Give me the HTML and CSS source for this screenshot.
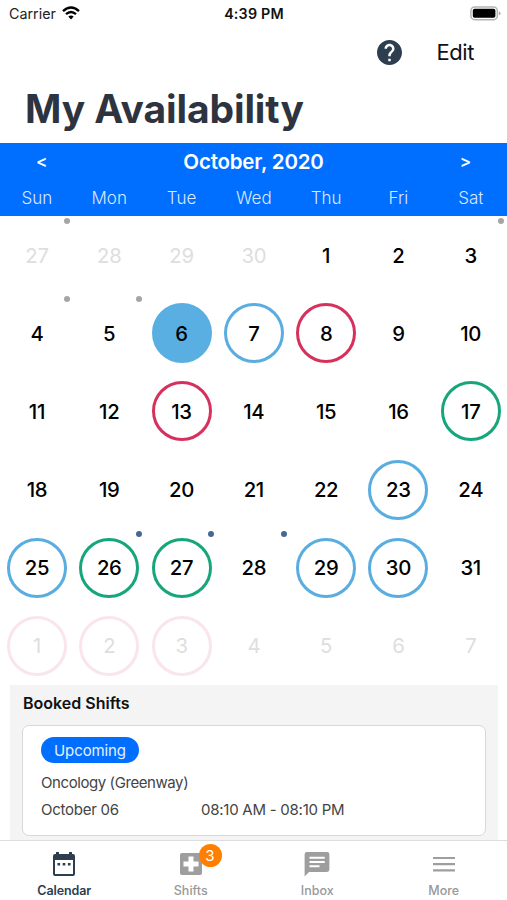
FILE: index.html
```html
<!DOCTYPE html>
<html lang="en">
<head>
<meta charset="utf-8">
<title>My Availability</title>
<link rel="stylesheet" href="styles.css">
</head>
<body>
<div class="screen">
  <div class="status">
    <div class="carrier"><span>Carrier</span>
      <svg width="18" height="14" viewBox="0 0 18 14" fill="none" stroke="#000" stroke-width="2.4"><path d="M1 5.2Q9-2.2 17 5.2M4 8.2Q9 3.8 14 8.2"/><path d="M6.3 10.6Q9 8.5 11.7 10.6L9 13.5Z" fill="#000" stroke="none"/></svg>
    </div>
    <div class="clock">4:39 PM</div>
    <div class="power">
      <svg width="31" height="15" viewBox="0 0 31 15"><rect x=".9" y=".9" width="26.4" height="12.8" rx="3.8" fill="#fff" stroke="#b4b4b4" stroke-width="1.5"/><rect x="2.8" y="2.8" width="22.6" height="9" rx="1.8"/><path d="M28.8 5.2Q30.6 6 30.6 7.3T28.8 9.4Z" fill="#aaa"/></svg>
    </div>
  </div>
  <div class="actions">
    <svg class="help" viewBox="2 2 20 20" fill="#2c3e50"><path d="M12 2C6.48 2 2 6.48 2 12s4.48 10 10 10 10-4.48 10-10S17.52 2 12 2zm1 17h-2v-2h2v2zm2.07-7.75l-.9.92C13.45 12.9 13 13.5 13 15h-2v-.5c0-1.1.45-2.1 1.17-2.83l1.24-1.26c.37-.36.59-.86.59-1.41 0-1.1-.9-2-2-2s-2 .9-2 2H8c0-2.21 1.79-4 4-4s4 1.79 4 4c0 .88-.36 1.68-.93 2.25z"/></svg>
    <span class="edit">Edit</span>
  </div>
  <h1>My Availability</h1>
  <header class="cal-head">
    <div class="month"><span class="arrow">&lt;</span><span class="name">October, 2020</span><span class="arrow">&gt;</span></div>
    <div class="week"><span>Sun</span><span>Mon</span><span>Tue</span><span>Wed</span><span>Thu</span><span>Fri</span><span>Sat</span></div>
  </header>
  <main class="days">
    <div class="day out dot"><span>27</span></div><div class="day out"><span>28</span></div><div class="day out"><span>29</span></div><div class="day out"><span>30</span></div><div class="day"><span>1</span></div><div class="day"><span>2</span></div><div class="day dot"><span>3</span></div>
    <div class="day dot"><span>4</span></div><div class="day dot"><span>5</span></div><div class="day full"><span>6</span></div><div class="day blue"><span>7</span></div><div class="day red"><span>8</span></div><div class="day"><span>9</span></div><div class="day"><span>10</span></div>
    <div class="day"><span>11</span></div><div class="day"><span>12</span></div><div class="day red"><span>13</span></div><div class="day"><span>14</span></div><div class="day"><span>15</span></div><div class="day"><span>16</span></div><div class="day green"><span>17</span></div>
    <div class="day"><span>18</span></div><div class="day"><span>19</span></div><div class="day"><span>20</span></div><div class="day"><span>21</span></div><div class="day"><span>22</span></div><div class="day blue"><span>23</span></div><div class="day"><span>24</span></div>
    <div class="day blue"><span>25</span></div><div class="day green dot navy"><span>26</span></div><div class="day green dot navy"><span>27</span></div><div class="day dot navy"><span>28</span></div><div class="day blue"><span>29</span></div><div class="day blue"><span>30</span></div><div class="day"><span>31</span></div>
    <div class="day out pink"><span>1</span></div><div class="day out pink"><span>2</span></div><div class="day out pink"><span>3</span></div><div class="day out"><span>4</span></div><div class="day out"><span>5</span></div><div class="day out"><span>6</span></div><div class="day out"><span>7</span></div>
  </main>
  <section class="booked">
    <h2>Booked Shifts</h2>
    <div class="card">
      <span class="pill">Upcoming</span>
      <div class="place">Oncology (Greenway)</div>
      <div class="when"><span>October 06</span><span>08:10 AM - 08:10 PM</span></div>
    </div>
  </section>
  <nav class="tabs">
    <div class="tab active">
      <svg width="24" height="26" viewBox="0 0 24 26" fill="#2c3e50"><path d="M4 1h3v2h10V1h3v2h1q2 0 2 2v18q0 2-2 2H3q-2 0-2-2V5q0-2 2-2h1zM3 9v14h18V9z" fill-rule="evenodd"/><path d="M5.500 12h2.600v2.400H5.500zM10.700 12h2.600v2.400h-2.600zM15.900 12h2.600v2.400h-2.600z"/></svg>
      <span>Calendar</span>
    </div>
    <div class="tab">
      <svg width="24" height="26" viewBox="0 0 24 26"><rect x="1" y="2" width="22" height="22" rx="2" fill="#9e9e9e"/><path d="M9.500 5.500h5v5h5v5h-5v5h-5v-5h-5v-5h5z" fill="#fff"/></svg>
      <b class="badge">3</b>
      <span>Shifts</span>
    </div>
    <div class="tab">
      <svg width="26" height="26" viewBox="0 0 26 26" fill="#9e9e9e"><path d="M3 1h20q2.400 0 2.400 2.400v15.200q0 2.400-2.400 2.400H5L.6 25.400V3.400Q.6 1 3 1z"/><path d="M5.500 6.700h15.200M5.500 11h15.200M5.500 15.300h10" stroke="#fff" stroke-width="2"/></svg>
      <span>Inbox</span>
    </div>
    <div class="tab">
      <svg width="24" height="26" viewBox="0 0 24 26" stroke="#9e9e9e" stroke-width="2.200"><path d="M1 7h22M1 13.200h22M1 19.400h22"/></svg>
      <span>More</span>
    </div>
  </nav>
</div>
</body>
</html>
```
FILE: styles.css
```css
* { box-sizing: border-box; }
body { margin: 0; background: #fff; font-family: Inter, "Liberation Sans", sans-serif; color: #000; }
svg { display: block; flex: none; }
.screen { width: 507px; height: 900px; overflow: hidden; display: flex; flex-direction: column; }
.status { height: 28px; flex: none; display: grid; grid-template-columns: 1fr auto 1fr; align-items: center; padding: 0 6px 0 9px; font-size: 14.300px; color: #222; }
.carrier { display: flex; align-items: center; gap: 6px; margin-top: -2px; }
.carrier svg { margin-top: -1px; }
.clock { font-weight: 600; color: #111; margin: -2px 2px 0 0; letter-spacing: .2px; }
.power { justify-self: end; margin-top: -2px; }
.actions { height: 48px; flex: none; display: flex; justify-content: flex-end; align-items: center; gap: 34px; padding-right: 33px; }
.help { width: 25px; height: 25px; }
.edit { font-size: 22px; color: #111; letter-spacing: -.4px; }
h1 { height: 66.500px; flex: none; margin: 0; padding: 9px 0 0 25px; font-size: 39px; line-height: 48px; font-weight: 700; letter-spacing: -.1px; color: #2d3440; white-space: nowrap; }
.cal-head { height: 73.500px; flex: none; background: #006eff; color: #fff; }
.month { height: 37px; display: flex; align-items: center; justify-content: space-between; padding: 0 36px; font-weight: 600; font-size: 20.500px; letter-spacing: -.2px; }
.arrow { font-size: 17px; line-height: 20px; }
.week, .days { display: grid; grid-template-columns: repeat(7, 72.300px); padding-left: .8px; }
.week { height: 36px; align-items: center; text-align: center; font-size: 17px; font-weight: 300; color: #d9e9ff; }
.days { flex: none; height: 469px; grid-auto-rows: 78.170px; }
.day { position: relative; display: flex; align-items: center; justify-content: center; }
.day > span { width: 60px; height: 60px; display: flex; align-items: center; justify-content: center; border: 3px solid transparent; border-radius: 50%; font-size: 20.300px; font-weight: 500; letter-spacing: -.3px; }
.out > span { color: #dedede; font-weight: 400; }
.blue > span { border-color: #5aade0; }
.full > span { background: #5aafe2; border-color: #5aafe2; }
.red > span { border-color: #d6315d; }
.green > span { border-color: #17a67b; }
.pink > span { border-color: #fae5ea; }
.dot::after { content: ""; position: absolute; width: 6px; height: 6px; border-radius: 50%; background: #a5a5a5; left: 63px; top: 2px; }
.navy::after { background: #486894; }
.booked { flex: 1; min-height: 0; overflow: hidden; margin: 0 9px 0 10px; padding: 0 12px; background: #f4f4f4; }
h2 { margin: 0; height: 40px; padding: 8px 0 0 1px; font-size: 16px; line-height: 21px; font-weight: 600; color: #111; }
.card { height: 111px; border: 1.500px solid #d8d8d8; border-radius: 7px; background: #fff; padding: 11px 17px 11px 18px; font-size: 15px; color: #444; font-weight: 400; }
.pill { display: flex; width: 98px; height: 26px; align-items: center; justify-content: center; border-radius: 13px; background: #006eff; color: #e5f0ff; letter-spacing: -.1px; }
.place { line-height: 20px; margin-top: 10px; letter-spacing: -.42px; }
.when { display: grid; grid-template-columns: 160px auto; line-height: 20px; margin-top: 7px; letter-spacing: -.25px; }
.tabs { height: 60px; flex: none; border-top: 1px solid #ddd; display: grid; grid-template-columns: repeat(4, 126.500px); padding-left: 1px; background: #fff; }
.tab { position: relative; display: flex; flex-direction: column; align-items: center; padding-top: 10px; font-size: 12.500px; font-weight: 500; color: #999; }
.tab span { line-height: 16px; margin-top: 6px; }
.active { color: #2c3e50; }
.active span { font-weight: 600; letter-spacing: -.1px; }
.badge { position: absolute; left: 71px; top: 3px; width: 23px; height: 23px; border-radius: 50%; background: #ff8000; color: #fff; font-size: 15px; font-weight: 400; line-height: 23px; text-align: center; }
```
